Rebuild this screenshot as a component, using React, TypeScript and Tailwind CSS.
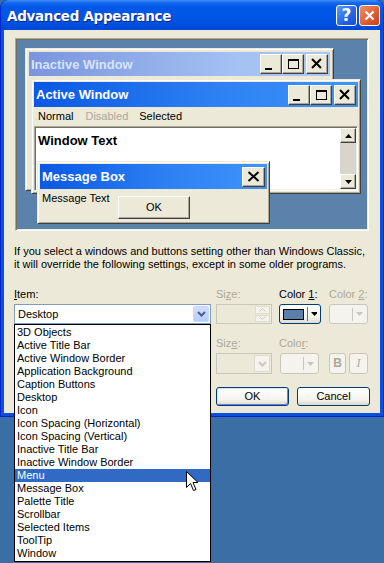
import React from 'react';

const items = [
  '3D Objects',
  'Active Title Bar',
  'Active Window Border',
  'Application Background',
  'Caption Buttons',
  'Desktop',
  'Icon',
  'Icon Spacing (Horizontal)',
  'Icon Spacing (Vertical)',
  'Inactive Title Bar',
  'Inactive Window Border',
  'Menu',
  'Message Box',
  'Palette Title',
  'Scrollbar',
  'Selected Items',
  'ToolTip',
  'Window',
];

// classic 3D caption button used inside the preview
const CapBtn: React.FC<{ kind: 'min' | 'max' | 'close'; w?: number }> = ({ kind, w = 22 }) => (
  <div
    className="h-[20px] bg-[#ece9d8] border border-t-white border-l-white border-r-[#404040] border-b-[#404040] shadow-[inset_-1px_-1px_#aca899] shrink-0"
    style={{ width: w }}
  >
    <svg width={w - 2} height="18" className="block">
      {kind === 'min' && <rect x="4" y="13" width="7" height="2" fill="#000" />}
      {kind === 'max' && (
        <g>
          <rect x="5.5" y="4.5" width="10" height="9" fill="none" stroke="#000" />
          <rect x="5" y="4" width="11" height="2" fill="#000" />
        </g>
      )}
      {kind === 'close' && (
        <path
          d={w > 22 ? 'M5.5 4 L15.5 13 M15.5 4 L5.5 13' : 'M5 4 L14 13 M14 4 L5 13'}
          stroke="#000"
          strokeWidth="2"
          fill="none"
        />
      )}
    </svg>
  </div>
);

const ScrollArrow: React.FC<{ up?: boolean }> = ({ up }) => (
  <div className="w-[16px] h-[15px] bg-[#ece9d8] border border-t-white border-l-white border-r-[#404040] border-b-[#404040] shadow-[inset_-1px_-1px_#aca899] flex items-center justify-center">
    <svg width="7" height="4">
      <path d={up ? 'M3.5 0 L7 4 L0 4 Z' : 'M0 0 L7 0 L3.5 4 Z'} fill="#000" />
    </svg>
  </div>
);

const XpButton: React.FC<{ label: string; def?: boolean }> = ({ label, def }) => (
  <div
    className={`w-[73px] h-[19px] rounded-[3px] border border-[#003c74] bg-[linear-gradient(to_bottom,#ffffff,#f4f3ee_70%,#dcd8c8)] flex items-center justify-center text-[11px] text-black ${
      def ? 'shadow-[inset_1px_1px_#cee7ff,inset_-1px_-1px_#6982ee]' : ''
    }`}
  >
    {label}
  </div>
);

export default function App() {
  return (
    <div className="relative w-[384px] h-[563px] bg-[#3b6ea5] font-['Liberation_Sans',Arial,sans-serif] text-[11px] leading-[13px] text-black overflow-hidden">
      {/* dialog */}
      <div className="w-[384px] h-[417px] flex flex-col rounded-t-[8px] bg-[#0a4fe0] border-l border-l-[#0025c8] border-r border-r-[#0025c8] border-b border-b-[#0025c8]">
        {/* title bar */}
        <div className="h-[30px] flex items-center pl-[6px] pr-[3px] rounded-t-[8px] bg-[linear-gradient(to_bottom,#3d90fa_0px,#1466ec_3px,#0058e8_7px,#0054e3_20px,#0048d6_30px)]">
          <span className="flex-1 pt-[2px] text-white font-bold text-[13.5px] leading-[16px] [text-shadow:1px_1px_#0b2590] font-['DejaVu_Sans',sans-serif] tracking-[-0.3px]">
            Advanced Appearance
          </span>
          <div className="w-[21px] h-[21px] rounded-[3px] border border-white bg-[linear-gradient(135deg,#5d9cfe,#2662e6_60%,#1a4fd0)] flex items-center justify-center text-white font-bold text-[17px] leading-[17px] font-['DejaVu_Sans',sans-serif]">
            ?
          </div>
          <div className="ml-[2px] w-[21px] h-[21px] rounded-[3px] border border-white bg-[linear-gradient(135deg,#f0916a,#e15a2e_60%,#c84117)] flex items-center justify-center">
            <svg width="11" height="11">
              <path d="M1.5 1.5 L9.5 9.5 M9.5 1.5 L1.5 9.5" stroke="#fff" strokeWidth="2.2" fill="none" />
            </svg>
          </div>
        </div>

        {/* client area */}
        <div className="flex-1 mx-[3px] mb-[3px] bg-[#ece9d8] flex flex-col">
          {/* preview */}
          <div className="ml-[11px] mt-[8px] w-[354px] h-[193px] border border-t-[#aca899] border-l-[#aca899] border-r-white border-b-white shadow-[inset_1px_1px_#716f64,inset_-1px_-1px_#f1efe2] p-[1px]">
            <div className="relative w-full h-full bg-[#5a82ab]">
              {/* inactive window */}
              <div className="absolute left-[8px] top-[8px] w-[309px] h-[143px] bg-[#ece9d8] border border-t-[#ece9d8] border-l-[#ece9d8] border-r-[#404040] border-b-[#404040] shadow-[inset_1px_1px_#fff,inset_-1px_-1px_#aca899] p-[3px]">
                <div className="h-[24px] flex items-center pl-[2px] pr-[2px] bg-[linear-gradient(to_right,#7a95de,#a4c2f2_70%,#a8c8f4)]">
                  <span className="flex-1 font-bold text-[13px] text-[#d8e4f8]">Inactive Window</span>
                  <CapBtn kind="min" />
                  <CapBtn kind="max" />
                  <div className="w-[2px]" />
                  <CapBtn kind="close" />
                </div>
              </div>

              {/* active window */}
              <div className="absolute left-[14px] top-[39px] w-[330px] h-[115px] flex flex-col bg-[#ece9d8] border border-t-[#ece9d8] border-l-[#ece9d8] border-r-[#404040] border-b-[#404040] shadow-[inset_1px_1px_#fff,inset_-1px_-1px_#aca899] p-[2px]">
                <div className="h-[25px] shrink-0 flex items-center pl-[2px] pr-[2px] bg-[linear-gradient(to_right,#0a58e4,#2c80f2_55%,#3f94fc)]">
                  <span className="flex-1 font-bold text-[13px] text-white">Active Window</span>
                  <CapBtn kind="min" />
                  <CapBtn kind="max" />
                  <div className="w-[2px]" />
                  <CapBtn kind="close" />
                </div>
                <div className="h-[19px] shrink-0 flex items-center pl-[4px]">
                  <span>Normal</span>
                  <span className="ml-[12px] text-[#aca899]">Disabled</span>
                  <span className="ml-[11px]">Selected</span>
                </div>
                <div className="flex-1 flex border border-t-[#aca899] border-l-[#aca899] border-r-white border-b-white shadow-[inset_1px_1px_#716f64,inset_-1px_-1px_#f1efe2] p-[1px]">
                  <div className="flex-1 bg-white pl-[2px] pt-[5px]">
                    <span className="font-bold text-[13px] leading-[15px]">Window Text</span>
                  </div>
                  <div className="w-[16px] flex flex-col justify-between bg-[#d8d5cd]">
                    <ScrollArrow up />
                    <ScrollArrow />
                  </div>
                </div>
              </div>

              {/* message box */}
              <div className="absolute left-[20px] top-[121px] w-[233px] h-[63px] flex flex-col bg-[#ece9d8] border border-t-[#ece9d8] border-l-[#ece9d8] border-r-[#404040] border-b-[#404040] shadow-[inset_1px_1px_#fff,inset_-1px_-1px_#aca899] p-[2px]">
                <div className="h-[25px] shrink-0 flex items-center pl-[2px] pr-[2px] bg-[linear-gradient(to_right,#0a58e4,#2c80f2_55%,#3f94fc)]">
                  <span className="flex-1 font-bold text-[13px] text-white">Message Box</span>
                  <CapBtn kind="close" w={23} />
                </div>
                <div className="flex items-start">
                  <span className="w-[78px] pl-[2px] pt-[3px] text-[11px]">Message Text</span>
                  <div className="mt-[7px] w-[72px] h-[23px] bg-[#ece9d8] border border-t-white border-l-white border-r-[#404040] border-b-[#404040] shadow-[inset_-1px_-1px_#aca899] flex items-center justify-center">
                    OK
                  </div>
                </div>
              </div>
            </div>
          </div>

          {/* explanation */}
          <p className="ml-[10px] mt-[14px] w-[356px]">
            If you select a windows and buttons setting other than Windows Classic,
            <br />
            it will override the following settings, except in some older programs.
          </p>

          {/* row 1 */}
          <div className="mt-[17px] flex">
            <div className="relative ml-[10px] w-[197px]">
              <div className="h-[14px]">
                <span className="underline">I</span>tem:
              </div>
              <div className="mt-[2px] h-[20px] border border-[#7f9db9] bg-white flex items-center pl-[3px] pr-[1px]">
                <span className="flex-1">Desktop</span>
                <div className="w-[16px] h-[16px] rounded-[2px] bg-[linear-gradient(to_bottom,#d1ddfd,#b8cdfa)] border border-[#c6d6fc] flex items-center justify-center">
                  <svg width="9" height="6">
                    <path d="M1 1 L4.5 4.5 L8 1" stroke="#4d6185" strokeWidth="2" fill="none" />
                  </svg>
                </div>
              </div>
              {/* open drop-down list */}
              <div className="absolute left-0 top-[36px] w-[197px] z-10 bg-white border border-black pt-[1px] pb-[1px]">
                {items.map(it => (
                  <div
                    key={it}
                    className={`h-[13px] pl-[2px] leading-[13px] whitespace-nowrap ${
                      it === 'Menu' ? 'bg-[#316ac5] text-white' : ''
                    }`}
                  >
                    {it}
                  </div>
                ))}
              </div>
            </div>

            <div className="ml-[5px] w-[56px]">
              <div className="h-[14px] text-[#aca899]">
                Si<span className="underline">z</span>e:
              </div>
              <div className="mt-[2px] h-[20px] border border-[#c9c7ba] bg-[#ece9d8] flex justify-end p-[1px]">
                <div className="w-[15px] flex flex-col gap-[1px]">
                  <div className="flex-1 border border-[#dedbd0] bg-[#f4f3ee] flex items-center justify-center">
                    <svg width="7" height="4"><path d="M0.5 3.5 L3.5 0.5 L6.5 3.5" stroke="#c9c7ba" fill="none" /></svg>
                  </div>
                  <div className="flex-1 border border-[#dedbd0] bg-[#f4f3ee] flex items-center justify-center">
                    <svg width="7" height="4"><path d="M0.5 0.5 L3.5 3.5 L6.5 0.5" stroke="#c9c7ba" fill="none" /></svg>
                  </div>
                </div>
              </div>
            </div>

            <div className="ml-[7px] w-[42px]">
              <div className="h-[14px] whitespace-nowrap">
                Color <span className="underline">1</span>:
              </div>
              <div className="mt-[2px] h-[20px] rounded-[3px] border border-[#003c74] bg-[linear-gradient(to_bottom,#ffffff,#f2f1ec_70%,#dedbcd)] flex items-center pl-[3px] pr-[3px]">
                <div className="w-[22px] h-[11px] border border-black bg-[#5a80a9]" />
                <div className="ml-[3px] w-[1px] h-[14px] bg-[#716f64]" />
                <svg width="7" height="4" className="ml-[3px]">
                  <path d="M0 0 L7 0 L3.5 4 Z" fill="#000" />
                </svg>
              </div>
            </div>

            <div className="ml-[8px] w-[39px]">
              <div className="h-[14px] whitespace-nowrap text-[#aca899]">
                Color <span className="underline">2</span>:
              </div>
              <div className="mt-[2px] h-[20px] rounded-[3px] border border-[#c9c7ba] bg-[#f4f3ee] flex items-center justify-end pr-[4px]">
                <div className="w-[1px] h-[13px] bg-[#c9c7ba]" />
                <svg width="7" height="4" className="ml-[3px]">
                  <path d="M0 0 L7 0 L3.5 4 Z" fill="#c9c7ba" />
                </svg>
              </div>
            </div>
          </div>

          {/* row 2 */}
          <div className="mt-[13px] flex">
            <div className="ml-[212px] w-[56px]">
              <div className="h-[14px] text-[#aca899]">
                Siz<span className="underline">e</span>:
              </div>
              <div className="mt-[2px] h-[21px] border border-[#c9c7ba] bg-[#ece9d8] flex justify-end p-[1px]">
                <div className="w-[16px] border border-[#dedbd0] bg-[#f4f3ee] flex items-center justify-center">
                  <svg width="9" height="6">
                    <path d="M1 1 L4.5 4.5 L8 1" stroke="#c9c7ba" strokeWidth="2" fill="none" />
                  </svg>
                </div>
              </div>
            </div>

            <div className="ml-[7px] w-[40px]">
              <div className="h-[14px] text-[#aca899]">
                Colo<span className="underline">r</span>:
              </div>
              <div className="mt-[2px] ml-[1px] h-[21px] rounded-[3px] border border-[#c9c7ba] bg-[#f4f3ee] flex items-center justify-end pr-[4px]">
                <div className="w-[1px] h-[13px] bg-[#c9c7ba]" />
                <svg width="7" height="4" className="ml-[3px]">
                  <path d="M0 0 L7 0 L3.5 4 Z" fill="#c9c7ba" />
                </svg>
              </div>
            </div>

            <div className="ml-[10px] mt-[16px] flex gap-[3px]">
              <div className="w-[17px] h-[21px] rounded-[3px] border border-[#c9c7ba] bg-[#f4f3ee] flex items-center justify-center font-bold text-[12px] text-[#aca899]">
                B
              </div>
              <div className="w-[19px] h-[21px] rounded-[3px] border border-[#c9c7ba] bg-[#f4f3ee] flex items-center justify-center italic text-[12px] text-[#aca899] font-['Liberation_Serif',serif]">
                I
              </div>
            </div>
          </div>

          {/* row 3 */}
          <div className="mt-[13px] ml-[212px] flex gap-[8px]">
            <XpButton label="OK" def />
            <XpButton label="Cancel" />
          </div>
        </div>
      </div>

      {/* mouse pointer */}
      <svg width="13" height="22" className="absolute left-[186px] top-[471px] z-20">
        <path
          d="M0.5 0.5 L0.5 16.5 L4.5 12.5 L7.5 19.5 L10 18.5 L7 11.5 L12 11.5 Z"
          fill="#fff"
          stroke="#000"
          strokeWidth="1"
          strokeLinejoin="miter"
        />
      </svg>
    </div>
  );
}
